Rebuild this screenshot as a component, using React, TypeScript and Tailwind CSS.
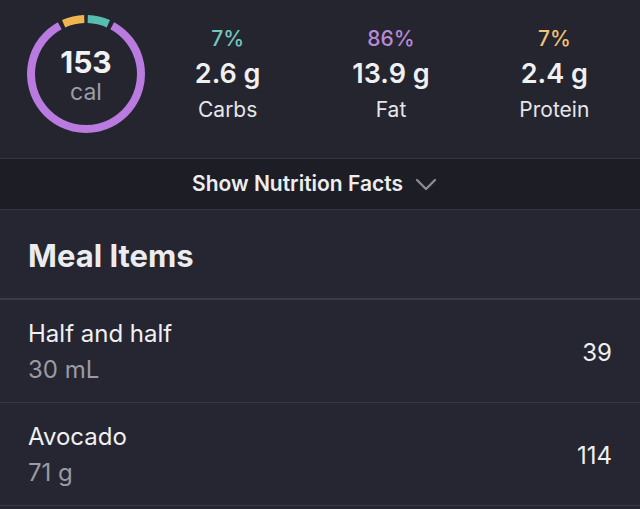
const macros = [
  { pct: "7%", value: "2.6 g", label: "Carbs", color: "text-[#72c8c1]" },
  { pct: "86%", value: "13.9 g", label: "Fat", color: "text-[#b98ad6]" },
  { pct: "7%", value: "2.4 g", label: "Protein", color: "text-[#f2c27a]" },
];

const items = [
  { name: "Half and half", amount: "30 mL", cal: "39" },
  { name: "Avocado", amount: "71 g", cal: "114" },
];

// arc path on a circle, angles in degrees clockwise from top
function arc(cx: number, cy: number, r: number, a0: number, a1: number) {
  const p = (a: number) => {
    const rad = ((a - 90) * Math.PI) / 180;
    return [cx + r * Math.cos(rad), cy + r * Math.sin(rad)];
  };
  const [x0, y0] = p(a0);
  const [x1, y1] = p(a1);
  const large = a1 - a0 > 180 ? 1 : 0;
  return `M ${x0} ${y0} A ${r} ${r} 0 ${large} 1 ${x1} ${y1}`;
}

function CalorieRing() {
  return (
    <div className="relative w-[120px] h-[120px] shrink-0">
      <svg width="120" height="120" viewBox="0 0 120 120">
        <path d={arc(60, 60, 55, 1.8, 24)} stroke="#56bdb0" strokeWidth="8" fill="none" />
        <path d={arc(60, 60, 55, 28.5, 331.5)} stroke="#b97be0" strokeWidth="8" fill="none" />
        <path d={arc(60, 60, 55, 336, 358.2)} stroke="#f0b450" strokeWidth="8" fill="none" />
      </svg>
      <div className="absolute inset-0 flex flex-col items-center justify-center pt-[4px]">
        <span className="text-[30px] leading-[32px] font-bold text-[#f2f2f4]">153</span>
        <span className="text-[23px] leading-[28px] text-[#9c9da5]">cal</span>
      </div>
    </div>
  );
}

export default function App() {
  return (
    <main
      className="w-[640px] h-[509px] overflow-hidden bg-[#252631] text-[#f0f0f2]"
      style={{ fontFamily: "Inter, 'Noto Sans', sans-serif" }}
    >
      <section className="h-[158px] flex items-start pt-[14px] pl-[26px] pr-[4px] bg-[#24252f]">
        <CalorieRing />
        <div className="flex-1 grid grid-cols-3 pt-[12px]">
          {macros.map((m) => (
            <div key={m.label} className="flex flex-col items-center">
              <span className={`text-[21px] leading-[26px] font-medium ${m.color}`}>{m.pct}</span>
              <span className="text-[27px] leading-[34px] font-semibold mt-[5px]">{m.value}</span>
              <span className="text-[21px] leading-[30px] text-[#e6e6ea] mt-[4px]">{m.label}</span>
            </div>
          ))}
        </div>
      </section>

      <div className="h-[52px] flex items-center justify-center gap-[12px] pr-[11px] bg-[#1c1d25] border-t border-b border-[#32343f]">
        <span className="text-[21px] font-semibold text-[#ededf0]">Show Nutrition Facts</span>
        <svg width="22" height="13" viewBox="0 0 22 13" className="mt-[1px]">
          <polyline points="2,2 11,11 20,2" fill="none" stroke="#8a8b94" strokeWidth="2.4" strokeLinecap="round" strokeLinejoin="round" />
        </svg>
      </div>

      <div className="h-[90px] flex items-center pt-[5px] px-[28px] border-b-2 border-[#393b48]">
        <h2 className="text-[31px] font-bold text-[#ececef]">Meal Items</h2>
      </div>

      {items.map((it) => (
        <div key={it.name} className="h-[103px] flex items-center justify-between pl-[28px] pr-[28px] border-b border-[#363844]">
          <div className="flex flex-col pt-[2px]">
            <span className="text-[24px] leading-[32px] text-[#f0f0f2]">{it.name}</span>
            <span className="text-[24px] leading-[32px] text-[#9a9ba3] mt-[4px]">{it.amount}</span>
          </div>
          <span className="text-[24px] pt-[4px] text-[#f0f0f2]">{it.cal}</span>
        </div>
      ))}
    </main>
  );
}
